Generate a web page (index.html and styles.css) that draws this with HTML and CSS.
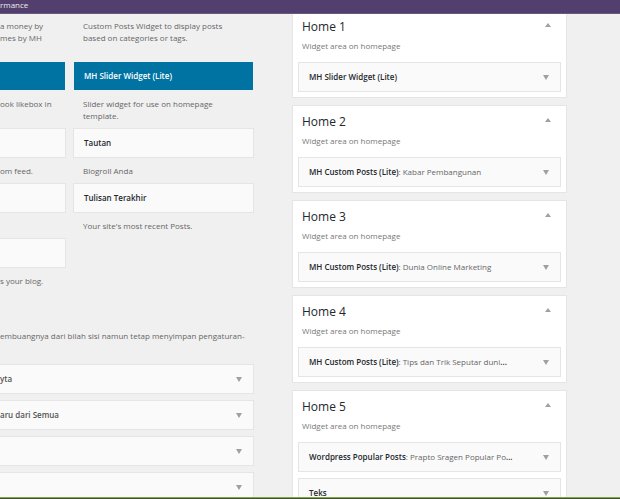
FILE: index.html
```
<!DOCTYPE html>
<html lang="id">
<head>
    <meta charset="UTF-8">
    <meta name="viewport" content="width=device-width, initial-scale=1.0">
    <title>Widget</title>
    <link rel="stylesheet" href="styles.css">
</head>
<body>
    <header class="adminbar"><a href="#">rmance</a></header>

    <main class="content">
        <div class="left">
            <!-- Available widgets -->
            <div class="available">
                <div class="col">
                    <p class="desc first">a money by<br>mes by MH</p>
                    <div class="widget active"></div>
                    <p class="desc tall">ook likebox in</p>
                    <div class="widget"></div>
                    <p class="desc">om feed.</p>
                    <div class="widget"></div>
                    <p class="desc">&nbsp;</p>
                    <div class="widget"></div>
                    <p class="desc">s your blog.</p>
                </div>
                <div class="col wide">
                    <p class="desc first">Custom Posts Widget to display posts based on categories or tags.</p>
                    <div class="widget active"><h3>MH Slider Widget (Lite)</h3></div>
                    <p class="desc tall">Slider widget for use on homepage template.</p>
                    <div class="widget"><h3>Tautan</h3></div>
                    <p class="desc">Blogroll Anda</p>
                    <div class="widget"><h3>Tulisan Terakhir</h3></div>
                    <p class="desc">Your site's most recent Posts.</p>
                </div>
            </div>

            <!-- Inactive widgets -->
            <p class="inactive-text">embuangnya dari bilah sisi namun tetap menyimpan pengaturan-</p>
            <div class="inactive">
                <div class="widget"><h3>yta</h3><button class="toggle" aria-label="Buka"><svg width="6" height="5"><path d="M0 0h6L3 5z"/></svg></button></div>
                <div class="widget"><h3>aru dari Semua</h3><button class="toggle" aria-label="Buka"><svg width="6" height="5"><path d="M0 0h6L3 5z"/></svg></button></div>
                <div class="widget"><h3></h3><button class="toggle" aria-label="Buka"><svg width="6" height="5"><path d="M0 0h6L3 5z"/></svg></button></div>
                <div class="widget"><h3></h3><button class="toggle" aria-label="Buka"><svg width="6" height="5"><path d="M0 0h6L3 5z"/></svg></button></div>
            </div>
        </div>

        <!-- Sidebars -->
        <div class="right">
            <section class="sidebar">
                <div class="title"><h2>Home 1</h2><button class="toggle" aria-label="Tutup"><svg width="6" height="4"><path d="M0 4h6L3 0z"/></svg></button></div>
                <p class="area">Widget area on homepage</p>
                <div class="widget"><h3>MH Slider Widget (Lite)</h3><button class="toggle" aria-label="Buka"><svg width="6" height="5"><path d="M0 0h6L3 5z"/></svg></button></div>
            </section>
            <section class="sidebar">
                <div class="title"><h2>Home 2</h2><button class="toggle" aria-label="Tutup"><svg width="6" height="4"><path d="M0 4h6L3 0z"/></svg></button></div>
                <p class="area">Widget area on homepage</p>
                <div class="widget"><h3>MH Custom Posts (Lite)<span>: Kabar Pembangunan</span></h3><button class="toggle" aria-label="Buka"><svg width="6" height="5"><path d="M0 0h6L3 5z"/></svg></button></div>
            </section>
            <section class="sidebar">
                <div class="title"><h2>Home 3</h2><button class="toggle" aria-label="Tutup"><svg width="6" height="4"><path d="M0 4h6L3 0z"/></svg></button></div>
                <p class="area">Widget area on homepage</p>
                <div class="widget"><h3>MH Custom Posts (Lite)<span>: Dunia Online Marketing</span></h3><button class="toggle" aria-label="Buka"><svg width="6" height="5"><path d="M0 0h6L3 5z"/></svg></button></div>
            </section>
            <section class="sidebar">
                <div class="title"><h2>Home 4</h2><button class="toggle" aria-label="Tutup"><svg width="6" height="4"><path d="M0 4h6L3 0z"/></svg></button></div>
                <p class="area">Widget area on homepage</p>
                <div class="widget"><h3>MH Custom Posts (Lite)<span>: Tips dan Trik Seputar duni</span>...</h3><button class="toggle" aria-label="Buka"><svg width="6" height="5"><path d="M0 0h6L3 5z"/></svg></button></div>
            </section>
            <section class="sidebar">
                <div class="title"><h2>Home 5</h2><button class="toggle" aria-label="Tutup"><svg width="6" height="4"><path d="M0 4h6L3 0z"/></svg></button></div>
                <p class="area">Widget area on homepage</p>
                <div class="widget"><h3>Wordpress Popular Posts<span>: Prapto Sragen Popular Po</span>...</h3><button class="toggle" aria-label="Buka"><svg width="6" height="5"><path d="M0 0h6L3 5z"/></svg></button></div>
                <div class="widget"><h3>Teks</h3><button class="toggle" aria-label="Buka"><svg width="6" height="5"><path d="M0 0h6L3 5z"/></svg></button></div>
            </section>
        </div>
    </main>

    <footer class="bottombar"></footer>
</body>
</html>
```
FILE: styles.css
```
* {
    box-sizing: border-box;
}
body {
    margin: 0;
    height: 100vh;
    display: flex;
    flex-direction: column;
    overflow: hidden;
    background: #f0f0f0;
    color: #666;
    font-family: "Open Sans", sans-serif;
    font-size: 8px;
    line-height: 12px;
}
h2, h3, p {
    margin: 0;
}
.adminbar {
    flex: none;
    height: 14px;
    background: #523f6d;
    border-bottom: 1px solid #67587d;
    line-height: 9px;
}
.adminbar a {
    color: #eee;
    text-decoration: none;
}
.content {
    flex: 1;
    min-height: 0;
    overflow: hidden;
    display: grid;
    grid-template-columns: 254fr 275fr;
    gap: 38px;
    align-items: start;
    padding-right: 53px;
}
.bottombar {
    flex: none;
    height: 2px;
    background: #3f5426;
    border-top: 1px solid #86a356;
}

/* widget boxes */
.widget {
    height: 30px;
    display: flex;
    align-items: center;
    justify-content: space-between;
    padding: 0 11px 0 10px;
    background: #fafafa;
    border: 1px solid #e5e5e5;
}
.widget h3 {
    color: #23282d;
    font-size: 8px;
    font-weight: 600;
    white-space: nowrap;
}
.widget h3 span {
    color: #666;
    font-weight: 400;
}
.widget.active {
    background: #0073a3;
    background-clip: padding-box;
    border-color: transparent;
}
.widget.active h3 {
    color: #fff;
}
.toggle {
    display: flex;
    padding: 0;
    border: 0;
    background: none;
    cursor: pointer;
}
.toggle svg {
    fill: #a0a0a0;
}

/* left side */
.available {
    display: grid;
    grid-template-columns: 66fr 181fr;
    gap: 7px;
}
.col:first-child .widget {
    border-left: 0;
}
.desc {
    margin: 7px 0 6px;
    white-space: nowrap;
}
.wide .desc {
    padding: 0 12px 0 10px;
    white-space: normal;
}
.first {
    margin-top: 6px;
    min-height: 35px;
}
.tall {
    min-height: 24px;
}
.inactive-text {
    margin: 37px 0 22px;
    white-space: nowrap;
}
.inactive .widget {
    margin-bottom: 6px;
    padding-left: 0;
    border-left: 0;
}
.inactive h3 {
    color: #555;
}

/* right side */
.right {
    margin-top: -4px;
}
.sidebar {
    margin-bottom: 7px;
    padding: 8px 5px 5px;
    background: #fff;
    border: 1px solid #e5e5e5;
}
.title {
    display: flex;
    align-items: flex-start;
    justify-content: space-between;
    padding: 0 10px 0 4px;
}
.title .toggle {
    padding-top: 4px;
}
.title h2 {
    color: #23282d;
    font-size: 12px;
    font-weight: 400;
    line-height: 16px;
}
.area {
    margin: 5px 0 10px;
    padding-left: 4px;
    color: #777;
}
.sidebar .widget + .widget {
    margin-top: 6px;
}
```
